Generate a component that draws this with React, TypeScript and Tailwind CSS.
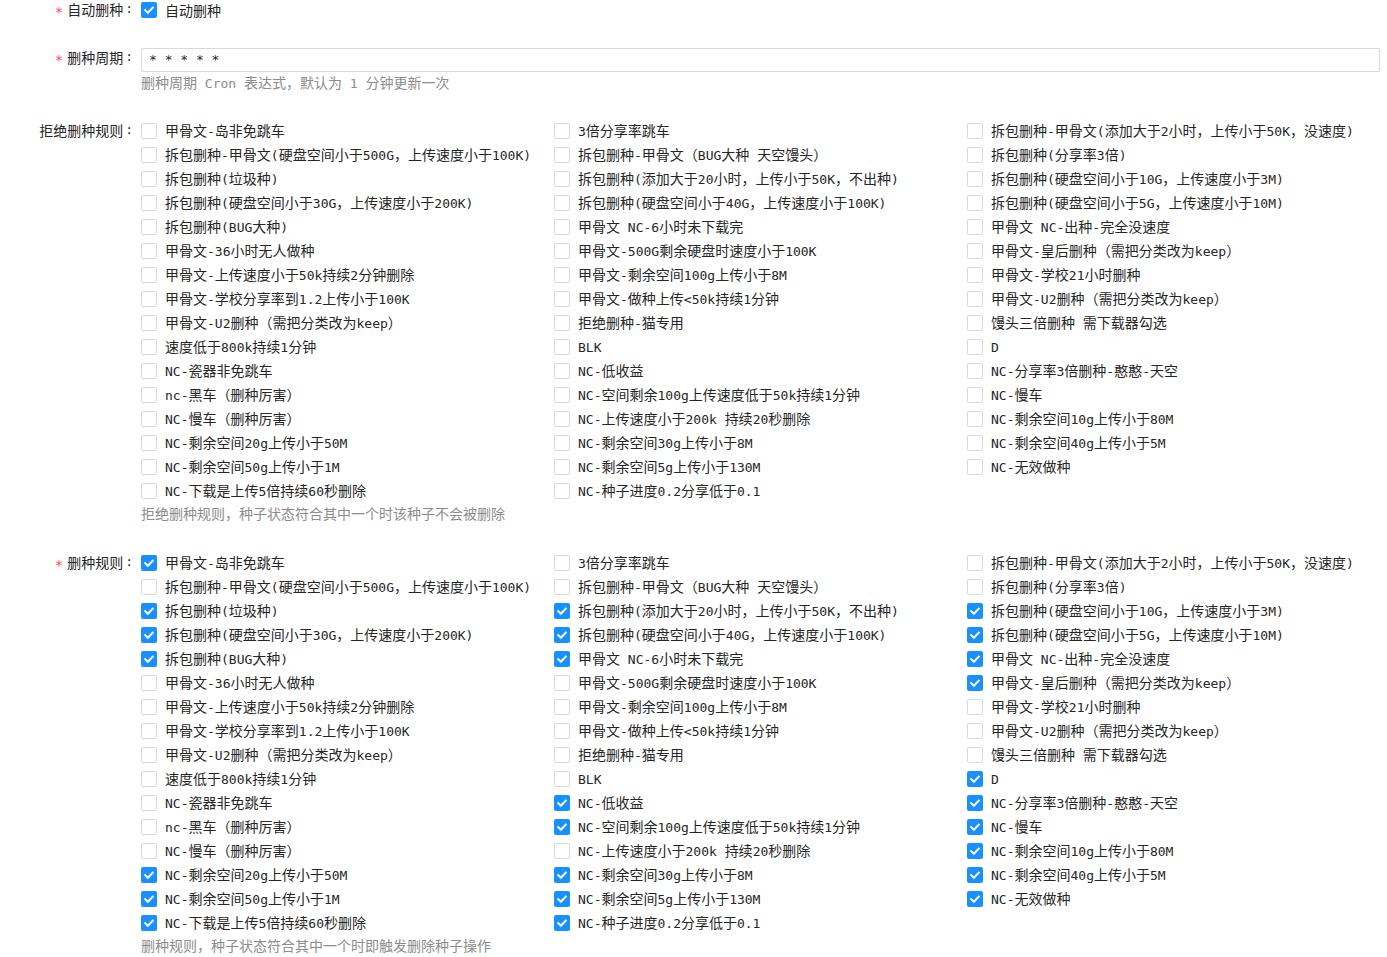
import React from "react";

const ITEMS: string[] = [
  "甲骨文-岛非免跳车",
  "3倍分享率跳车",
  "拆包删种-甲骨文(添加大于2小时，上传小于50K，没速度)",
  "拆包删种-甲骨文(硬盘空间小于500G，上传速度小于100K)",
  "拆包删种-甲骨文（BUG大种 天空馒头）",
  "拆包删种(分享率3倍)",
  "拆包删种(垃圾种)",
  "拆包删种(添加大于20小时，上传小于50K，不出种)",
  "拆包删种(硬盘空间小于10G，上传速度小于3M)",
  "拆包删种(硬盘空间小于30G，上传速度小于200K)",
  "拆包删种(硬盘空间小于40G，上传速度小于100K)",
  "拆包删种(硬盘空间小于5G，上传速度小于10M)",
  "拆包删种(BUG大种)",
  "甲骨文 NC-6小时未下载完",
  "甲骨文 NC-出种-完全没速度",
  "甲骨文-36小时无人做种",
  "甲骨文-500G剩余硬盘时速度小于100K",
  "甲骨文-皇后删种（需把分类改为keep）",
  "甲骨文-上传速度小于50k持续2分钟删除",
  "甲骨文-剩余空间100g上传小于8M",
  "甲骨文-学校21小时删种",
  "甲骨文-学校分享率到1.2上传小于100K",
  "甲骨文-做种上传<50k持续1分钟",
  "甲骨文-U2删种（需把分类改为keep）",
  "甲骨文-U2删种（需把分类改为keep）",
  "拒绝删种-猫专用",
  "馒头三倍删种 需下载器勾选",
  "速度低于800k持续1分钟",
  "BLK",
  "D",
  "NC-瓷器非免跳车",
  "NC-低收益",
  "NC-分享率3倍删种-憨憨-天空",
  "nc-黑车（删种厉害）",
  "NC-空间剩余100g上传速度低于50k持续1分钟",
  "NC-慢车",
  "NC-慢车（删种厉害）",
  "NC-上传速度小于200k 持续20秒删除",
  "NC-剩余空间10g上传小于80M",
  "NC-剩余空间20g上传小于50M",
  "NC-剩余空间30g上传小于8M",
  "NC-剩余空间40g上传小于5M",
  "NC-剩余空间50g上传小于1M",
  "NC-剩余空间5g上传小于130M",
  "NC-无效做种",
  "NC-下载是上传5倍持续60秒删除",
  "NC-种子进度0.2分享低于0.1",
];

const CHECKED = new Set<number>([
  0, 6, 7, 8, 9, 10, 11, 12, 13, 14, 17, 29, 31, 32, 34, 35, 38, 39, 40, 41, 42,
  43, 44, 45, 46,
]);

function Txt({ s }: { s: string }) {
  const parts = s.match(/[\x20-\x7e]+|[^\x20-\x7e]+/g) || [];
  return (
    <>
      {parts.map((p, i) =>
        /[\x20-\x7e]/.test(p[0]) ? (
          <span
            key={i}
            className="font-['DejaVu_Sans_Mono',monospace] text-[13px] whitespace-pre"
          >
            {p}
          </span>
        ) : (
          <span key={i}>{p}</span>
        )
      )}
    </>
  );
}

function Box({ checked }: { checked: boolean }) {
  return checked ? (
    <span className="flex h-4 w-4 shrink-0 items-center justify-center rounded-[2px] bg-[#1890ff]">
      <svg width="16" height="16" viewBox="0 0 16 16">
        <polyline
          points="4.2,8.1 6.9,10.8 11.8,5.6"
          fill="none"
          stroke="#ffffff"
          strokeWidth="2"
          strokeLinecap="square"
        />
      </svg>
    </span>
  ) : (
    <span className="block h-4 w-4 shrink-0 rounded-[2px] border border-[#d9d9d9] bg-white" />
  );
}

function Check({ label, checked }: { label: string; checked: boolean }) {
  return (
    <div className="flex h-6 items-center">
      <Box checked={checked} />
      <span className="pl-2 leading-6 whitespace-nowrap">
        <Txt s={label} />
      </span>
    </div>
  );
}

function Label({ text, required }: { text: string; required?: boolean }) {
  return (
    <div className="flex w-[141px] shrink-0 items-center justify-end">
      {required && (
        <span className="mr-1 inline-block translate-y-[3px] font-['DejaVu_Sans_Mono',monospace] text-[14px] leading-none text-[#ff4d4f]">
          *
        </span>
      )}
      <span>{text}</span>
      <span className="ml-[2px] mr-2 font-['DejaVu_Sans_Mono',monospace] text-[13px]">:</span>
    </div>
  );
}

function Help({ s }: { s: string }) {
  return (
    <div className="h-5 leading-5 text-[#8c8c8c]">
      <Txt s={s} />
    </div>
  );
}

function Rules({ checkedSet }: { checkedSet: Set<number> | null }) {
  return (
    <div className="grid grid-cols-3">
      {ITEMS.map((it, i) => (
        <Check key={i} label={it} checked={checkedSet ? checkedSet.has(i) : false} />
      ))}
    </div>
  );
}

export default function App() {
  return (
    <div className="h-[957px] w-[1387px] overflow-hidden bg-white font-['Noto_Sans_CJK_SC',sans-serif] text-[14px] text-[#262626]">
      {/* 自动删种 */}
      <div className="flex h-[22px] -translate-y-px items-center">
        <div className="flex h-[22px] -translate-y-px items-center leading-[20px]">
          <Label text="自动删种" required />
        </div>
        <div className="flex items-center">
          <Box checked />
          <span className="pl-2">自动删种</span>
        </div>
      </div>

      {/* 删种周期 */}
      <div className="mt-[26px] flex">
        <div className="leading-[18px]">
          <Label text="删种周期" required />
        </div>
        <div className="w-[1239px]">
          <div className="flex h-6 items-center rounded-[2px] border border-[#d9d9d9] px-[7px]">
            <span className="font-['DejaVu_Sans_Mono',monospace] text-[13px] whitespace-pre">* * * * *</span>
          </div>
          <Help s="删种周期 Cron 表达式，默认为 1 分钟更新一次" />
        </div>
      </div>

      {/* 拒绝删种规则 */}
      <div className="mt-[27px] flex">
        <div className="leading-[22px]">
          <Label text="拒绝删种规则" />
        </div>
        <div className="w-[1239px]">
          <Rules checkedSet={null} />
          <Help s="拒绝删种规则，种子状态符合其中一个时该种子不会被删除" />
        </div>
      </div>

      {/* 删种规则 */}
      <div className="mt-[28px] flex">
        <div className="leading-[22px]">
          <Label text="删种规则" required />
        </div>
        <div className="w-[1239px]">
          <Rules checkedSet={CHECKED} />
          <Help s="删种规则，种子状态符合其中一个时即触发删除种子操作" />
        </div>
      </div>
    </div>
  );
}
